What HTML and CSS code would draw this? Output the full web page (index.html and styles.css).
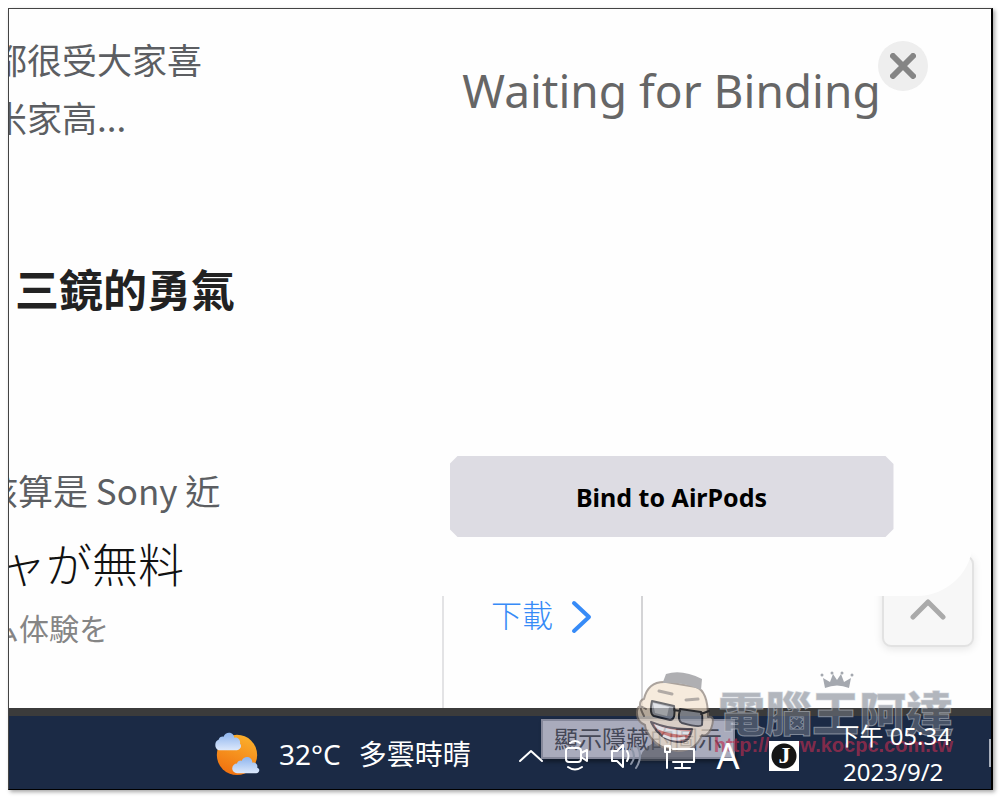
FILE: index.html
```html
<!DOCTYPE html>
<html lang="zh-Hant">
<head>
<meta charset="utf-8">
<title>Waiting for Binding</title>
<link rel="stylesheet" href="styles.css">
</head>
<body>
<div class="screen">
  <main class="page">
    <article class="article">
      <p class="excerpt">都很受大家喜<br>米家高...</p>
      <h2 class="headline">三鏡的勇氣</h2>
      <p class="excerpt excerpt-late">該算是 Sony 近</p>
    </article>
    <section class="ad">
      <div class="ad-copy" lang="ja">
        <p class="ad-title">ャが無料</p>
        <p class="ad-sub">ム体験を</p>
      </div>
      <a class="ad-link" href="#download">下載
        <svg class="ad-arrow" viewBox="0 0 22 34" aria-hidden="true"><path d="M3 3L18 17L3 31"/></svg>
      </a>
    </section>
    <button class="to-top" type="button" aria-label="Back to top">
      <svg viewBox="0 0 36 22" aria-hidden="true"><path d="M3 19L18 4L33 19"/></svg>
    </button>
    <section class="dialog" role="dialog" aria-labelledby="dialog-title">
      <h1 class="dialog-title" id="dialog-title">Waiting for Binding</h1>
      <button class="bind" type="button">Bind to AirPods</button>
      <button class="close" type="button" aria-label="Close">
        <svg viewBox="0 0 26 26" aria-hidden="true"><path d="M3 3L23 23M23 3L3 23"/></svg>
      </button>
    </section>
  </main>
  <footer class="taskbar">
    <div class="weather">
      <svg class="weather-icon" viewBox="0 0 50 46" aria-hidden="true">
        <defs>
          <linearGradient id="sun" x1="0.7" y1="0" x2="0.3" y2="1"><stop offset="0" stop-color="#fbb02c"/><stop offset="1" stop-color="#f0700f"/></linearGradient>
          <linearGradient id="cloud" x1="0" y1="0" x2="0" y2="1"><stop offset="0" stop-color="#8db4ee"/><stop offset="1" stop-color="#dce8fb"/></linearGradient>
        </defs>
        <circle cx="25" cy="24" r="21" fill="url(#sun)"/>
        <path d="M6 19a6 6 0 0 1 0-11 4 4 0 0 1 5-3c2-6 11-5 11 1 5-1 7 4 6 6 3 3 0 7-3 7z" fill="url(#cloud)"/>
        <path d="M25 43a5 5 0 0 1 0-10 4 4 0 0 1 5-3c2-6 11-5 11 2 4-1 6 3 5 5 4 2 2 6-1 6z" fill="url(#cloud)"/>
      </svg>
      <span>32°C</span>
      <span>多雲時晴</span>
    </div>
    <div class="tray">
      <svg class="icon-up" viewBox="0 0 26 14" aria-hidden="true"><path d="M2 12L13 2L24 12"/></svg>
      <svg class="icon-cam" viewBox="0 0 26 34" aria-hidden="true"><path d="M6 4Q11 0 16 4M5 9H14Q17 9 17 12V20Q17 23 14 23H5Q2 23 2 20V12Q2 9 5 9ZM17 14L23 11V22L17 18M4 28Q11 33 18 28"/></svg>
      <svg class="icon-sound" viewBox="0 0 34 28" aria-hidden="true"><path d="M2 9H7L13 3V25L7 19H2ZM17 9Q20 14 17 19"/><path class="faint" d="M21 6Q27 14 21 22M26 2Q34 14 26 26"/></svg>
      <svg class="icon-net" viewBox="0 0 32 30" aria-hidden="true"><path d="M9 8H30V21H9M18 21V27M11 27H26M3 11V27M1 5H6V11H1Z"/></svg>
      <span class="ime">A</span>
      <span class="jbox">J</span>
    </div>
    <div class="clock"><time>下午 05:34</time><time>2023/9/2</time></div>
    <span class="peek"></span>
    <div class="tooltip" role="tooltip">顯示隱藏的圖示</div>
  </footer>
  <div class="mark" aria-hidden="true">
    <svg class="mark-face" viewBox="0 0 78 92">
      <path d="M14 74Q28 64 44 70Q58 74 60 90H4Q4 80 14 74Z" fill="#555861"/>
      <path d="M8 45Q0 30 8 28Q12 10 30 11L60 16Q72 20 72 46Q80 44 75 58Q71 66 66 64Q60 80 42 80Q20 78 12 62Q9 58 9 54Q0 50 1 40Q2 32 10 38" fill="#f3e2cc" stroke="#80746a" stroke-width="2"/>
      <path d="M27 11L30 3Q46-2 66 8L65 19Q46 10 27 12Z" fill="#85868b"/>
      <path d="M23 20L36 23M50 29L62 28" stroke="#8a8078" stroke-width="3" fill="none"/>
      <path d="M16 30L38 35Q40 49 34 49L18 45Q13 43 16 30ZM44 38L65 41Q67 42 66 54Q64 57 46 52Q41 50 44 38ZM38 39L44 40M65 43L73 40" fill="#9a9ea8" stroke="#202126" stroke-width="2"/>
      <path d="M17 32L33 36L31 45L19 42Z" fill="#d5d8df"/>
      <path d="M15 51Q34 59 56 58Q54 72 42 71Q24 69 15 51Z" fill="#d8655d" stroke="#463c42" stroke-width="2"/>
      <path d="M18 53Q34 60 54 60L52 64Q34 64 21 58Z" fill="#fff"/>
      <path d="M28 65Q38 70 48 67" stroke="#fff" stroke-width="3" fill="none"/>
    </svg>
    <div class="mark-text">
      <svg class="mark-crown" viewBox="0 0 34 18"><path d="M5 17L3 7L10 11L13 3L17 9L21 3L24 11L31 7L29 17Q17 12 5 17Z"/><circle cx="2" cy="4" r="1.5"/><circle cx="12" cy="2" r="1.5"/><circle cx="22" cy="2" r="1.5"/><circle cx="32" cy="4" r="1.5"/></svg>
      <span class="mark-name">電腦王阿達</span>
      <span class="mark-url">http://www.kocpc.com.tw</span>
    </div>
  </div>
</div>
</body>
</html>
```
FILE: styles.css
```css
* { box-sizing: border-box; }
body {
  margin: 0;
  padding: 8px 7px 8px 8px;
  background: #fff;
  font-family: "Noto Sans", "Noto Sans CJK TC", sans-serif;
}
p, h1, h2 { margin: 0; }
button { border: 0; padding: 0; font: inherit; cursor: pointer; }
svg { display: block; fill: none; stroke-linecap: round; stroke-linejoin: round; }

.screen {
  position: relative;
  display: flex;
  flex-direction: column;
  min-height: calc(100vh - 16px);
  border: 1px solid #444;
  border-right: 2px solid #000;
  border-bottom-color: #000;
  box-shadow: 2px 2px 4px rgba(0, 0, 0, .35);
  overflow: hidden;
}
.page {
  position: relative;
  flex: 1;
  display: flex;
  flex-direction: column;
  background: #fefefe;
  overflow: hidden;
}
.article { padding-top: 21px; white-space: nowrap; }
.excerpt {
  margin-left: -17px;
  font: 35px/58px "Noto Sans CJK TC", sans-serif;
  color: #5c5e62;
}
.headline {
  margin: 112px 0 0 6px;
  font: bold 44px/60px "Noto Sans CJK TC", sans-serif;
  color: #222;
}
.excerpt-late { margin-top: 143px; margin-left: -26px; }

.ad {
  flex: 1;
  display: flex;
  font-family: "Noto Sans CJK JP", sans-serif;
}
.ad-copy {
  width: 435px;
  padding-top: 13px;
  border-right: 2px solid #e3e3e5;
  white-space: nowrap;
}
.ad-title { margin-left: -9px; font-size: 46px; line-height: 60px; font-weight: 300; color: #111; }
.ad-sub { margin: 15px 0 0 -20px; font-size: 30px; line-height: 40px; color: #858585; }
.ad-link {
  display: flex;
  align-items: flex-start;
  gap: 18px;
  width: 199px;
  padding: 75px 0 0 47px;
  border-right: 2px solid #d4d4d6;
  font: 31px/40px "Noto Sans CJK TC", sans-serif;
  font-weight: 300;
  color: #378bf7;
  text-decoration: none;
}
.ad-arrow { width: 22px; height: 34px; margin-top: 6px; stroke: #378bf7; stroke-width: 4; }

.to-top {
  position: absolute;
  right: 17px;
  bottom: 61px;
  display: grid;
  place-items: center;
  width: 92px;
  height: 92px;
  padding-top: 16px;
  border: 2px solid #e2e2e2;
  border-radius: 9px;
  background: #f7f7f7;
  box-shadow: 0 2px 8px rgba(0, 0, 0, .1);
}
.to-top svg { width: 36px; height: 22px; stroke: #aaa; stroke-width: 5; }

.dialog {
  position: absolute;
  top: 0;
  right: 18px;
  bottom: 112px;
  width: 603px;
  display: flex;
  flex-direction: column;
  align-items: center;
  justify-content: space-between;
  padding: 49px 0 59px;
  border-radius: 0 0 56px 56px;
  background: #fefefe;
}
.dialog-title {
  font-size: 46px;
  line-height: 64px;
  font-weight: 400;
  color: #666;
  white-space: nowrap;
}
.bind {
  width: 444px;
  height: 81px;
  background: #dddce3;
  clip-path: polygon(8px 0, calc(100% - 8px) 0, 100% 8px, 100% calc(100% - 8px), calc(100% - 8px) 100%, 8px 100%, 0 calc(100% - 8px), 0 8px);
  font-size: 25px;
  font-weight: 700;
  color: #000;
}
.close {
  position: absolute;
  top: 32px;
  right: 45px;
  display: grid;
  place-items: center;
  width: 50px;
  height: 50px;
  border-radius: 50%;
  background: #eee;
}
.close svg { width: 26px; height: 26px; stroke: #858585; stroke-width: 6; }

.taskbar {
  position: relative;
  display: flex;
  align-items: center;
  height: 81px;
  padding-left: 204px;
  border-top: 8px solid #3b3b3b;
  background: #1b2a45;
  color: #fff;
}
.weather {
  display: flex;
  align-items: center;
  gap: 18px;
  padding-top: 2px;
  font-size: 28px;
  line-height: 40px;
  white-space: nowrap;
}
.weather-icon { width: 48px; height: 46px; }
.tray {
  position: relative;
  z-index: 4;
  display: flex;
  align-items: center;
  gap: 20px;
  margin-left: auto;
  padding-top: 6px;
}
.tray svg { stroke: #fff; stroke-width: 2; }
.tray .faint { stroke: #8b93a5; }
.icon-up { width: 26px; height: 14px; }
.icon-cam { width: 26px; height: 34px; }
.icon-sound { width: 34px; height: 28px; }
.icon-net { width: 32px; height: 30px; }
.ime { font-size: 36px; line-height: 40px; }
.jbox {
  width: 30px;
  height: 30px;
  margin-left: 10px;
  border: 2px solid #fff;
  background: radial-gradient(circle, #151515 12px, #fff 13px);
  font: bold 24px/24px "Liberation Serif", serif;
  text-align: center;
}
.clock {
  position: relative;
  z-index: 4;
  display: flex;
  flex-direction: column;
  align-items: center;
  margin: 0 38px 0 36px;
  padding-top: 2px;
  font-size: 24px;
  line-height: 36px;
  white-space: nowrap;
}
.peek { width: 2px; height: 28px; background: #a7aebb; }
.tooltip {
  position: absolute;
  left: 532px;
  top: 3px;
  padding: 0 11px;
  border: 2px solid #85889a;
  background: #a9abbc;
  box-shadow: 2px 3px 4px rgba(0, 0, 0, .4);
  font-size: 24px;
  line-height: 36px;
  color: #454857;
  white-space: nowrap;
}

.mark {
  position: absolute;
  right: 38px;
  bottom: 26px;
  z-index: 3;
  display: flex;
  align-items: flex-start;
  pointer-events: none;
}
.mark-face { width: 78px; height: 92px; opacity: .65; }
.mark-text {
  display: flex;
  flex-direction: column;
  align-items: flex-end;
}
.mark-crown { width: 34px; height: 18px; margin-right: 99px; fill: #a4a8af; }
.mark-name {
  font: 900 47px/44px "Noto Sans CJK TC", sans-serif;
  color: rgba(112, 120, 133, .55);
  -webkit-text-stroke: 1px rgba(205, 210, 218, .5);
}
.mark-url {
  font: bold 20px/24px "Liberation Sans", sans-serif;
  color: rgba(190, 45, 80, .65);
}
```
